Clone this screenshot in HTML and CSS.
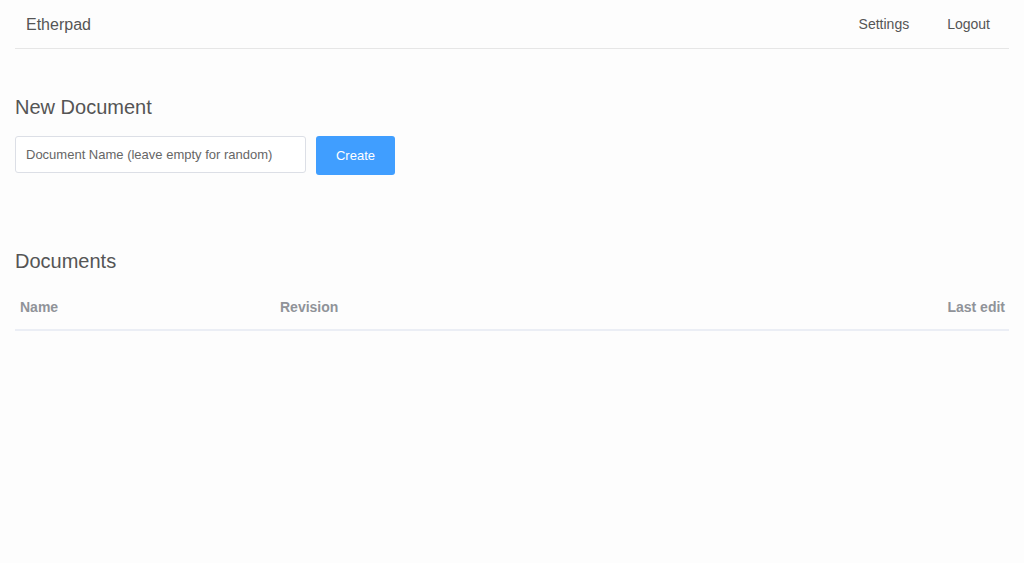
FILE: index.html
```html
<!DOCTYPE html>
<html lang="en">
<head>
    <meta charset="UTF-8">
    <title>Etherpad</title>
    <link rel="stylesheet" href="styles.css">
</head>
<body>
    <div class="page">
        <div class="topbar">
            <span class="brand">Etherpad</span>
            <div class="nav">
                <a class="navItem" href="#">Settings</a>
                <a class="navItem" href="#">Logout</a>
            </div>
        </div>

        <h2 class="titulo">New Document</h2>
        <div class="novoDoc">
            <input class="inNome" type="text" placeholder="Document Name (leave empty for random)">
            <button class="btCriar" type="button">Create</button>
        </div>

        <h2 class="titulo titDocs">Documents</h2>
        <div class="tabela">
            <div class="colNome">Name</div>
            <div class="colRev">Revision</div>
            <div class="colEdit">Last edit</div>
        </div>
    </div>
</body>
</html>
```

FILE: styles.css
```css
body {
    margin: 0;
    background: #fdfdfd;
    font-family: "Liberation Sans", Arial, sans-serif;
    color: #606266;
}
.page {
    padding: 0 15px;
}
.topbar {
    display: flex;
    justify-content: space-between;
    align-items: center;
    height: 48px;
    border-bottom: 1px solid #e6e6e6;
}
.brand {
    padding-left: 11px;
    padding-top: 2px;
    font-size: 16px;
    color: #555;
}
.nav {
    display: flex;
}
.navItem {
    padding: 0 19px;
    font-size: 14px;
    color: #555;
    text-decoration: none;
}
.titulo {
    margin: 46px 0 0 0;
    font-size: 20px;
    font-weight: normal;
    color: #555;
    line-height: 24px;
}
.titDocs {
    margin-top: 74px;
}
.novoDoc {
    display: flex;
    gap: 10px;
    margin-top: 17px;
}
.inNome {
    width: 291px;
    height: 37px;
    box-sizing: border-box;
    border: 1px solid #dcdfe6;
    border-radius: 3px;
    padding: 0 10px;
    font-family: inherit;
    font-size: 13px;
    background: #fff;
}
.inNome::placeholder {
    color: #666;
}
.btCriar {
    width: 79px;
    height: 39px;
    border: none;
    border-radius: 3px;
    background: #409eff;
    color: #fff;
    font-family: inherit;
    font-size: 13px;
}
.tabela {
    display: flex;
    margin-top: 12px;
    height: 44px;
    align-items: center;
    border-bottom: 2px solid #ebeef5;
    font-size: 14px;
    font-weight: bold;
    color: #909399;
}
.colNome {
    width: 260px;
    padding-left: 5px;
}
.colRev {
    flex: 1;
}
.colEdit {
    padding-right: 4px;
}
```
